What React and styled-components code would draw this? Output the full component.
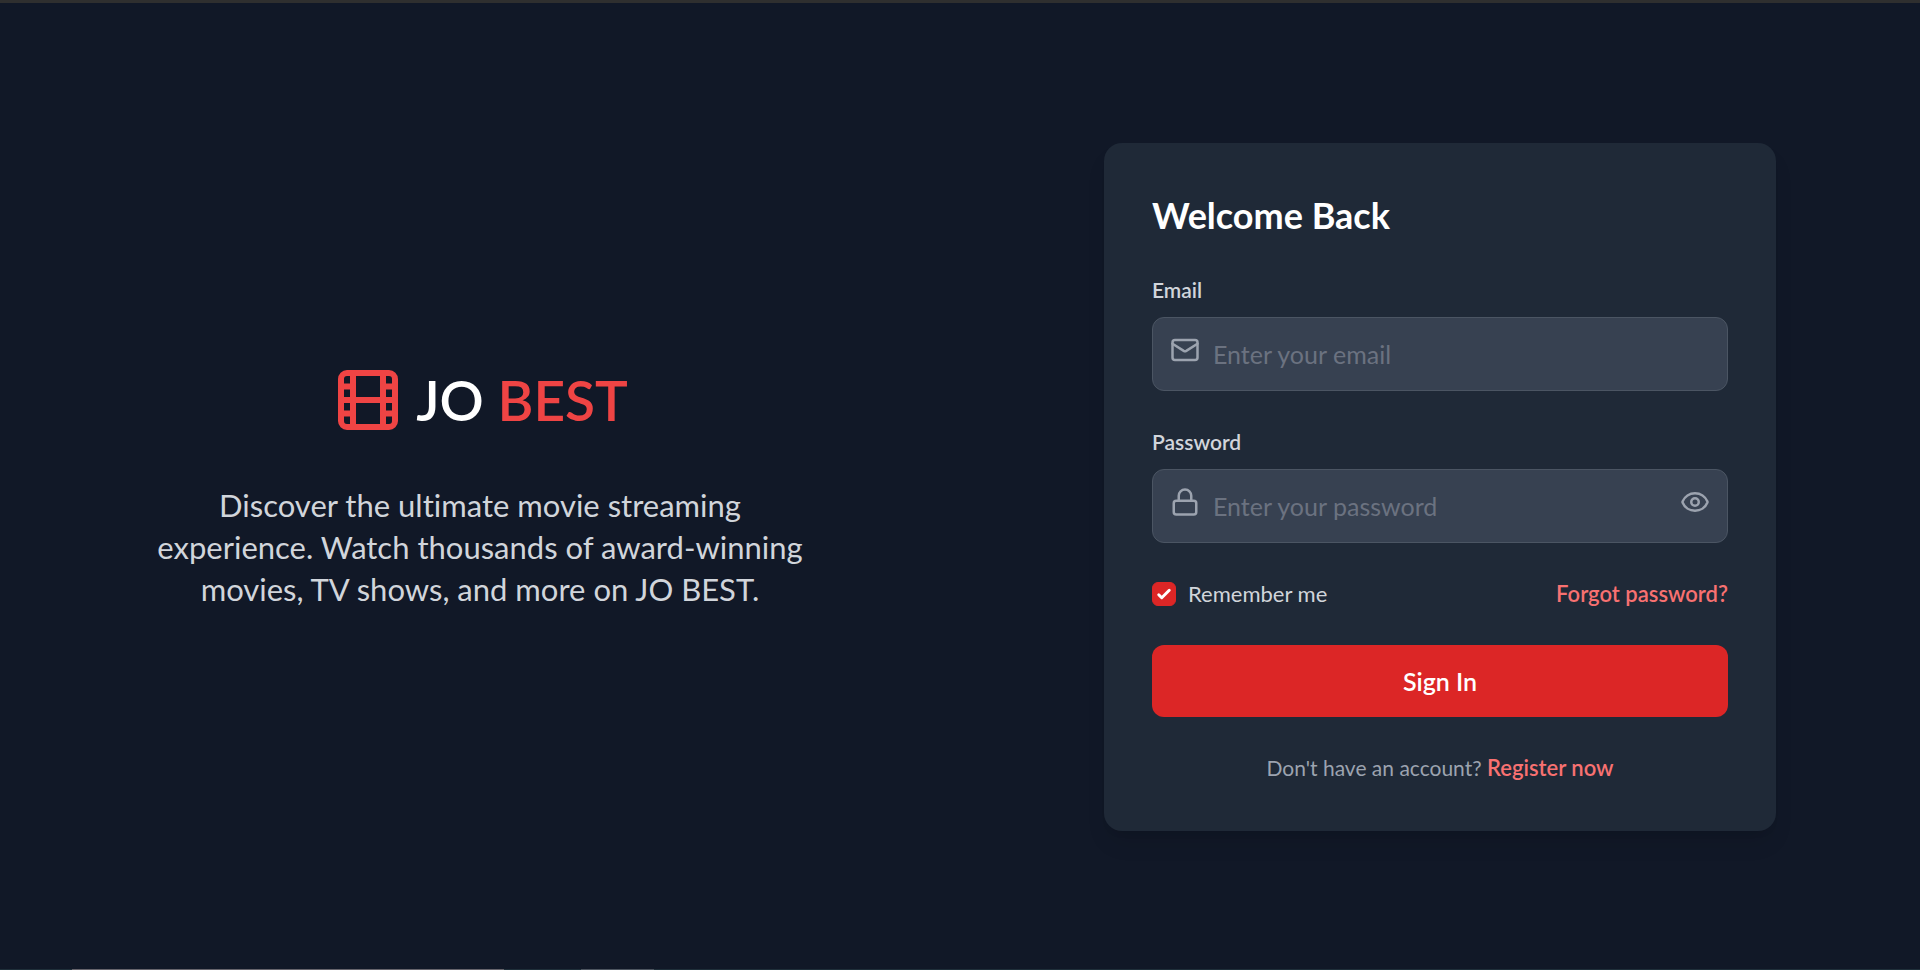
import React, { useState } from "react";
import styled, { createGlobalStyle } from "styled-components";
import { Film, Mail, Lock, Eye } from "lucide-react";

const GlobalStyle = createGlobalStyle`
  *, *::before, *::after { box-sizing: border-box; }
  body { margin: 0; background: #111827; }
  body, input, button {
    font-family: Lato, "Liberation Sans", sans-serif;
    font-variant-ligatures: none;
  }
`;

const Page = styled.div`
  min-height: 100vh;
  display: flex;
  flex-direction: column;
  background: #111827;
  color: #ffffff;
`;

const TopEdge = styled.div`
  height: 3px;
  background: #2f2f2f;
`;

const BottomEdge = styled.div`
  height: 1px;
  background: linear-gradient(
    90deg,
    #1f2f3a 0 72px,
    #66646c 72px 504px,
    #1f2f3a 504px 581px,
    #4d5560 581px 654px,
    #1f2f3a 654px
  );
`;

const Main = styled.main`
  flex: 1;
  display: grid;
  grid-template-columns: 1fr 1fr;
  align-items: center;
  padding-top: 2px;
`;

const Intro = styled.section`
  display: flex;
  flex-direction: column;
  align-items: center;
  gap: 48px;
  padding: 0 48px;
`;

const Brand = styled.div`
  display: flex;
  align-items: center;
  gap: 12px;
  color: #ef4444;
`;

const BrandName = styled.h1`
  margin: 0;
  font-size: 55px;
  line-height: 60px;
  font-weight: 600;
  color: #ffffff;
`;

const BrandAccent = styled.span`
  color: #ef4444;
`;

const Tagline = styled.p`
  margin: 0;
  max-width: 672px;
  font-size: 31px;
  line-height: 42px;
  text-align: center;
  color: #d1d5db;
`;

const FormSide = styled.section`
  display: flex;
  justify-content: center;
  padding: 0 48px;
`;

const Card = styled.form`
  width: 100%;
  max-width: 672px;
  display: flex;
  flex-direction: column;
  gap: 36px;
  padding: 48px;
  border-radius: 18px;
  background: #1f2937;
  box-shadow: 0 15px 23px -5px rgba(0, 0, 0, 0.1), 0 6px 9px -6px rgba(0, 0, 0, 0.1);
`;

const Heading = styled.h2`
  margin: 0;
  font-size: 36px;
  line-height: 48px;
  font-weight: 700;
`;

const Field = styled.div`
  display: flex;
  flex-direction: column;
  gap: 12px;
`;

const Label = styled.label`
  font-size: 21px;
  line-height: 30px;
  font-weight: 600;
  color: #d1d5db;
`;

const Control = styled.div`
  position: relative;
  color: #9ca3af;
`;

const LeadIcon = styled.span`
  position: absolute;
  top: 18px;
  left: 18px;
  display: flex;
  pointer-events: none;
`;

const TextInput = styled.input`
  display: block;
  width: 100%;
  padding: 18px 60px;
  border: 1px solid #4b5563;
  border-radius: 12px;
  background: #374151;
  color: #ffffff;
  font-size: 25px;
  line-height: 36px;
  height: 74px;
  outline: none;
  &::placeholder { color: #6b7280; opacity: 1; }
`;

const RevealButton = styled.button`
  position: absolute;
  top: 18px;
  right: 18px;
  display: flex;
  padding: 0;
  border: 0;
  background: none;
  color: inherit;
  cursor: pointer;
`;

const Options = styled.div`
  display: flex;
  align-items: center;
  justify-content: space-between;
  line-height: 30px;
`;

const Remember = styled.label`
  display: flex;
  align-items: center;
  gap: 12px;
  font-size: 22px;
  color: #d1d5db;
`;

const tick = encodeURIComponent(
  "<svg xmlns='http://www.w3.org/2000/svg' viewBox='0 0 16 16' fill='white'><path d='M12.207 4.793a1 1 0 0 1 0 1.414l-5 5a1 1 0 0 1-1.414 0l-2-2a1 1 0 0 1 1.414-1.414L6.5 9.086l4.293-4.293a1 1 0 0 1 1.414 0z'/></svg>"
);

const Checkbox = styled.input`
  appearance: none;
  width: 24px;
  height: 24px;
  margin: 0;
  border: 1px solid #4b5563;
  border-radius: 6px;
  background: #374151;
  &:checked {
    border-color: #dc2626;
    background: #dc2626 url("data:image/svg+xml,${tick}") center / 24px no-repeat;
  }
`;

const TextLink = styled.a`
  color: #f87171;
  font-size: 22px;
  font-weight: 600;
  text-decoration: none;
`;

const SubmitButton = styled.button`
  padding: 18px;
  border: 0;
  border-radius: 12px;
  background: #dc2626;
  color: #ffffff;
  font-size: 25px;
  line-height: 36px;
  font-weight: 600;
  cursor: pointer;
`;

const Register = styled.p`
  margin: 0;
  font-size: 21px;
  line-height: 30px;
  text-align: center;
  color: #9ca3af;
`;

export default function App() {
  const [visible, setVisible] = useState(false);
  return (
    <Page>
      <GlobalStyle />
      <TopEdge />
      <Main>
        <Intro>
          <Brand>
            <Film size={72} aria-hidden="true" />
            <BrandName>
              JO <BrandAccent>BEST</BrandAccent>
            </BrandName>
          </Brand>
          <Tagline>
            Discover the ultimate movie streaming experience. Watch thousands of
            award-winning movies, TV shows, and more on JO BEST.
          </Tagline>
        </Intro>
        <FormSide>
          <Card onSubmit={(e) => e.preventDefault()}>
            <Heading>Welcome Back</Heading>
            <Field>
              <Label htmlFor="email">Email</Label>
              <Control>
                <LeadIcon><Mail size={30} /></LeadIcon>
                <TextInput id="email" type="email" placeholder="Enter your email" />
              </Control>
            </Field>
            <Field>
              <Label htmlFor="password">Password</Label>
              <Control>
                <LeadIcon><Lock size={30} /></LeadIcon>
                <TextInput
                  id="password"
                  type={visible ? "text" : "password"}
                  placeholder="Enter your password"
                />
                <RevealButton
                  type="button"
                  aria-label="Show password"
                  onClick={() => setVisible(!visible)}
                >
                  <Eye size={30} />
                </RevealButton>
              </Control>
            </Field>
            <Options>
              <Remember>
                <Checkbox type="checkbox" defaultChecked />
                Remember me
              </Remember>
              <TextLink href="#forgot">Forgot password?</TextLink>
            </Options>
            <SubmitButton type="submit">Sign In</SubmitButton>
            <Register>
              Don't have an account?{" "}
              <TextLink href="#register">Register now</TextLink>
            </Register>
          </Card>
        </FormSide>
      </Main>
      <BottomEdge />
    </Page>
  );
}
